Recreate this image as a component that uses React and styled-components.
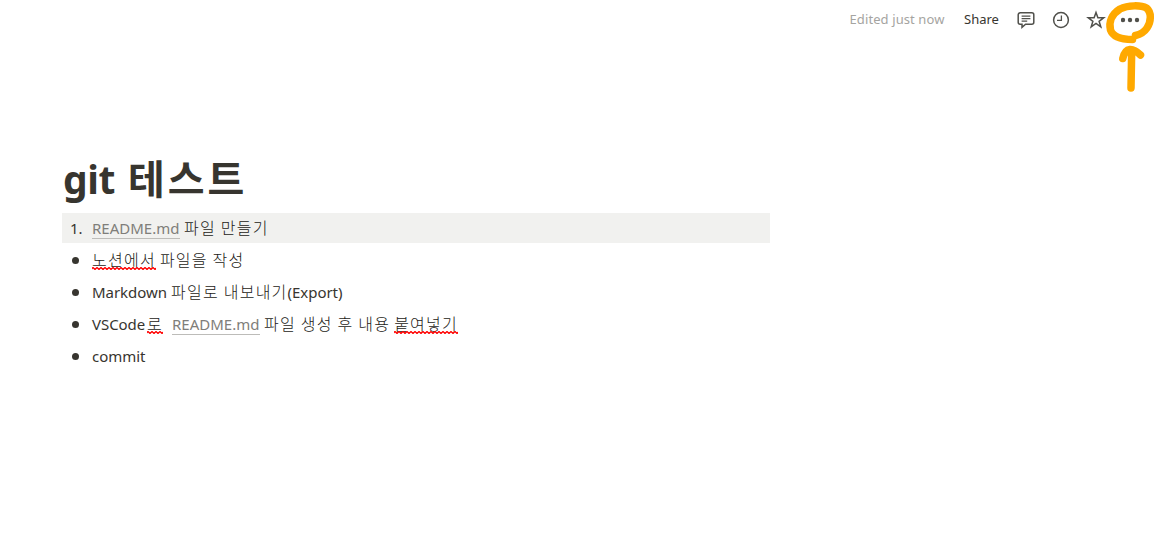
import React from 'react';
import styled, { createGlobalStyle } from 'styled-components';

const GlobalStyle = createGlobalStyle`
  * {
    box-sizing: border-box;
  }

  body {
    margin: 0;
    background: #ffffff;
    overflow: hidden;
  }
`;

const App = () => {
  return (
    <Page>
      <GlobalStyle />
      <Topbar>
        <Edited>Edited just now</Edited>
        <Share>Share</Share>
        <Actions>
          <CommentIcon />
          <ClockIcon />
          <StarIcon />
          <DotsIcon />
        </Actions>
      </Topbar>
      <Marker />
      <Content>
        <Title>
          <TitleLatin>git</TitleLatin>
          <TitleKorean>테스트</TitleKorean>
        </Title>
        <List>
          <Row $active>
            <Number>1.</Number>
            <Link>README.md</Link>
            <Korean $gap={4}>파일 만들기</Korean>
          </Row>
          <Row>
            <Bullet />
            <Misspelled>노션에서</Misspelled>
            <Korean $gap={4}>파일을 작성</Korean>
          </Row>
          <Row>
            <Bullet />
            <Latin $width={75}>Markdown</Latin>
            <Korean $gap={4}>파일로 내보내기</Korean>
            <Latin $width={56}>(Export)</Latin>
          </Row>
          <Row>
            <Bullet />
            <Latin $width={55}>VSCode</Latin>
            <Misspelled>로</Misspelled>
            <Link $gap={9}>README.md</Link>
            <Korean $gap={4}>파일 생성 후 내용</Korean>
            <Misspelled $gap={4}>붙여넣기</Misspelled>
          </Row>
          <Row $latinOnly>
            <Bullet />
            <Latin>commit</Latin>
          </Row>
        </List>
      </Content>
    </Page>
  );
}

const Misspelled = ({ children, $gap }) => (
  <Korean $gap={$gap}>
    {children}
    <Squiggle>
      <path d={'M-1 2.5' + 'l2 -2l2 2'.repeat(20)} />
    </Squiggle>
  </Korean>
);

const CommentIcon = () => (
  <Icon viewBox="0 0 20 20">
    <path d="M4.2 2.8h11.6a2 2 0 0 1 2 2v7.4a2 2 0 0 1-2 2H9.6L6 17.4v-3.2H4.2a2 2 0 0 1-2-2V4.8a2 2 0 0 1 2-2z" />
    <path d="M5.6 6.1h8.8M5.6 8.6h8.8M5.6 11.1h5.6" strokeWidth="1.1" />
  </Icon>
);

const ClockIcon = () => (
  <Icon viewBox="0 0 20 20">
    <circle cx="10" cy="10" r="7.4" />
    <path d="M10.4 5.4v5H6" strokeWidth="1.3" />
  </Icon>
);

const StarIcon = () => (
  <Icon viewBox="0 0 20 20">
    <path d="M10 2.4l1.9 5.4h5.8l-4.6 3.5 1.7 5.6L10 13.5l-4.8 3.4 1.7-5.6-4.6-3.5h5.8z" />
  </Icon>
);

const DotsIcon = () => (
  <Icon viewBox="0 0 20 20">
    <g fill="#50504b" stroke="none">
      <circle cx="2" cy="10" r="2.2" />
      <circle cx="9" cy="10" r="2.2" />
      <circle cx="16" cy="10" r="2.2" />
    </g>
  </Icon>
);

const Marker = () => (
  <MarkerSvg viewBox="0 0 57 100">
    <path d="M32.5 39.5C22 39.5 13 37 10.5 30C8.5 22 12 14 20 9C28 5 41 5 46.5 8C52 12.5 51 22 47 28C44 32.5 40 34.5 35.5 35.5" />
    <path d="M31.7 51L31 88M22.8 58.5C24 53 26 50 30 49.5C34 49.2 37.5 52 40.5 55" />
  </MarkerSvg>
);

const Page = styled.div`
  position: relative;
  height: 543px;
  color: #37352f;
  font-family: "Noto Sans", "Noto Sans CJK KR", sans-serif;
`;

const Topbar = styled.header`
  display: flex;
  align-items: center;
  height: 38px;
  padding-left: 849.5px;
  font-size: 13px;
  white-space: nowrap;
`;

const Edited = styled.span`
  width: 114.5px;
  color: #a5a4a1;
  letter-spacing: 0.1px;
`;

const Share = styled.span`
  width: 52px;
`;

const Actions = styled.div`
  display: flex;
  gap: 15px;
  padding-top: 2px;
`;

const Icon = styled.svg`
  width: 20px;
  height: 20px;
  fill: none;
  stroke: #50504b;
  stroke-width: 1.5;
`;

const MarkerSvg = styled.svg`
  position: absolute;
  top: 0;
  right: 0;
  width: 57px;
  height: 100px;
  fill: none;
  stroke: #ffa900;
  stroke-width: 7.5;
  stroke-linecap: round;
  stroke-linejoin: round;
`;

const Content = styled.main`
  width: 708px;
  margin: 111px 0 0 62px;
`;

const Title = styled.h1`
  display: flex;
  align-items: baseline;
  height: 64px;
  margin: 0;
  padding-left: 1px;
  font-size: 40px;
  line-height: 56px;
  font-weight: 700;
`;

const TitleLatin = styled.span`
  width: 65px;
  font-size: 39px;
  letter-spacing: -0.4px;
`;

const TitleKorean = styled.span`
  font-family: "Noto Sans CJK KR", sans-serif;
  font-size: 40px;
  letter-spacing: 3px;
`;

const List = styled.div`
  display: flex;
  flex-direction: column;
  gap: 2px;
`;

const Row = styled.div`
  display: flex;
  align-items: baseline;
  height: 30px;
  line-height: ${({ $latinOnly }) => ($latinOnly ? 30 : 28)}px;
  white-space: nowrap;
  background: ${({ $active }) => ($active ? '#f1f1ef' : 'transparent')};
`;

const Number = styled.span`
  width: 30px;
  padding-left: 8px;
  font-size: 15px;
`;

const Bullet = styled.span`
  width: 7px;
  height: 7px;
  margin: 1px 13px 0 10px;
  align-self: center;
  border-radius: 50%;
  background: #37352f;
`;

const Latin = styled.span`
  width: ${({ $width }) => ($width ? `${$width}px` : 'auto')};
  font-size: 15px;
  letter-spacing: -0.05px;
`;

const Link = styled.span`
  position: relative;
  width: 88px;
  margin-left: ${({ $gap = 0 }) => $gap}px;
  color: #7f7e7a;
  font-size: 15px;

  &::after {
    content: '';
    position: absolute;
    left: 0;
    right: 0;
    bottom: 3px;
    height: 1px;
    background: #bdbcb9;
  }
`;

const Korean = styled.span`
  position: relative;
  margin-left: ${({ $gap = 0 }) => $gap}px;
  color: #1c1a16;
  font-family: "Noto Sans CJK KR", sans-serif;
  font-size: 16px;
  font-weight: 300;
  letter-spacing: 1.25px;
`;

const Squiggle = styled.svg`
  position: absolute;
  left: 0;
  bottom: 3px;
  width: 100%;
  height: 3px;
  overflow: hidden;
  fill: none;
  stroke: #ff0000;
  stroke-width: 1.3;
`;

export default App;
